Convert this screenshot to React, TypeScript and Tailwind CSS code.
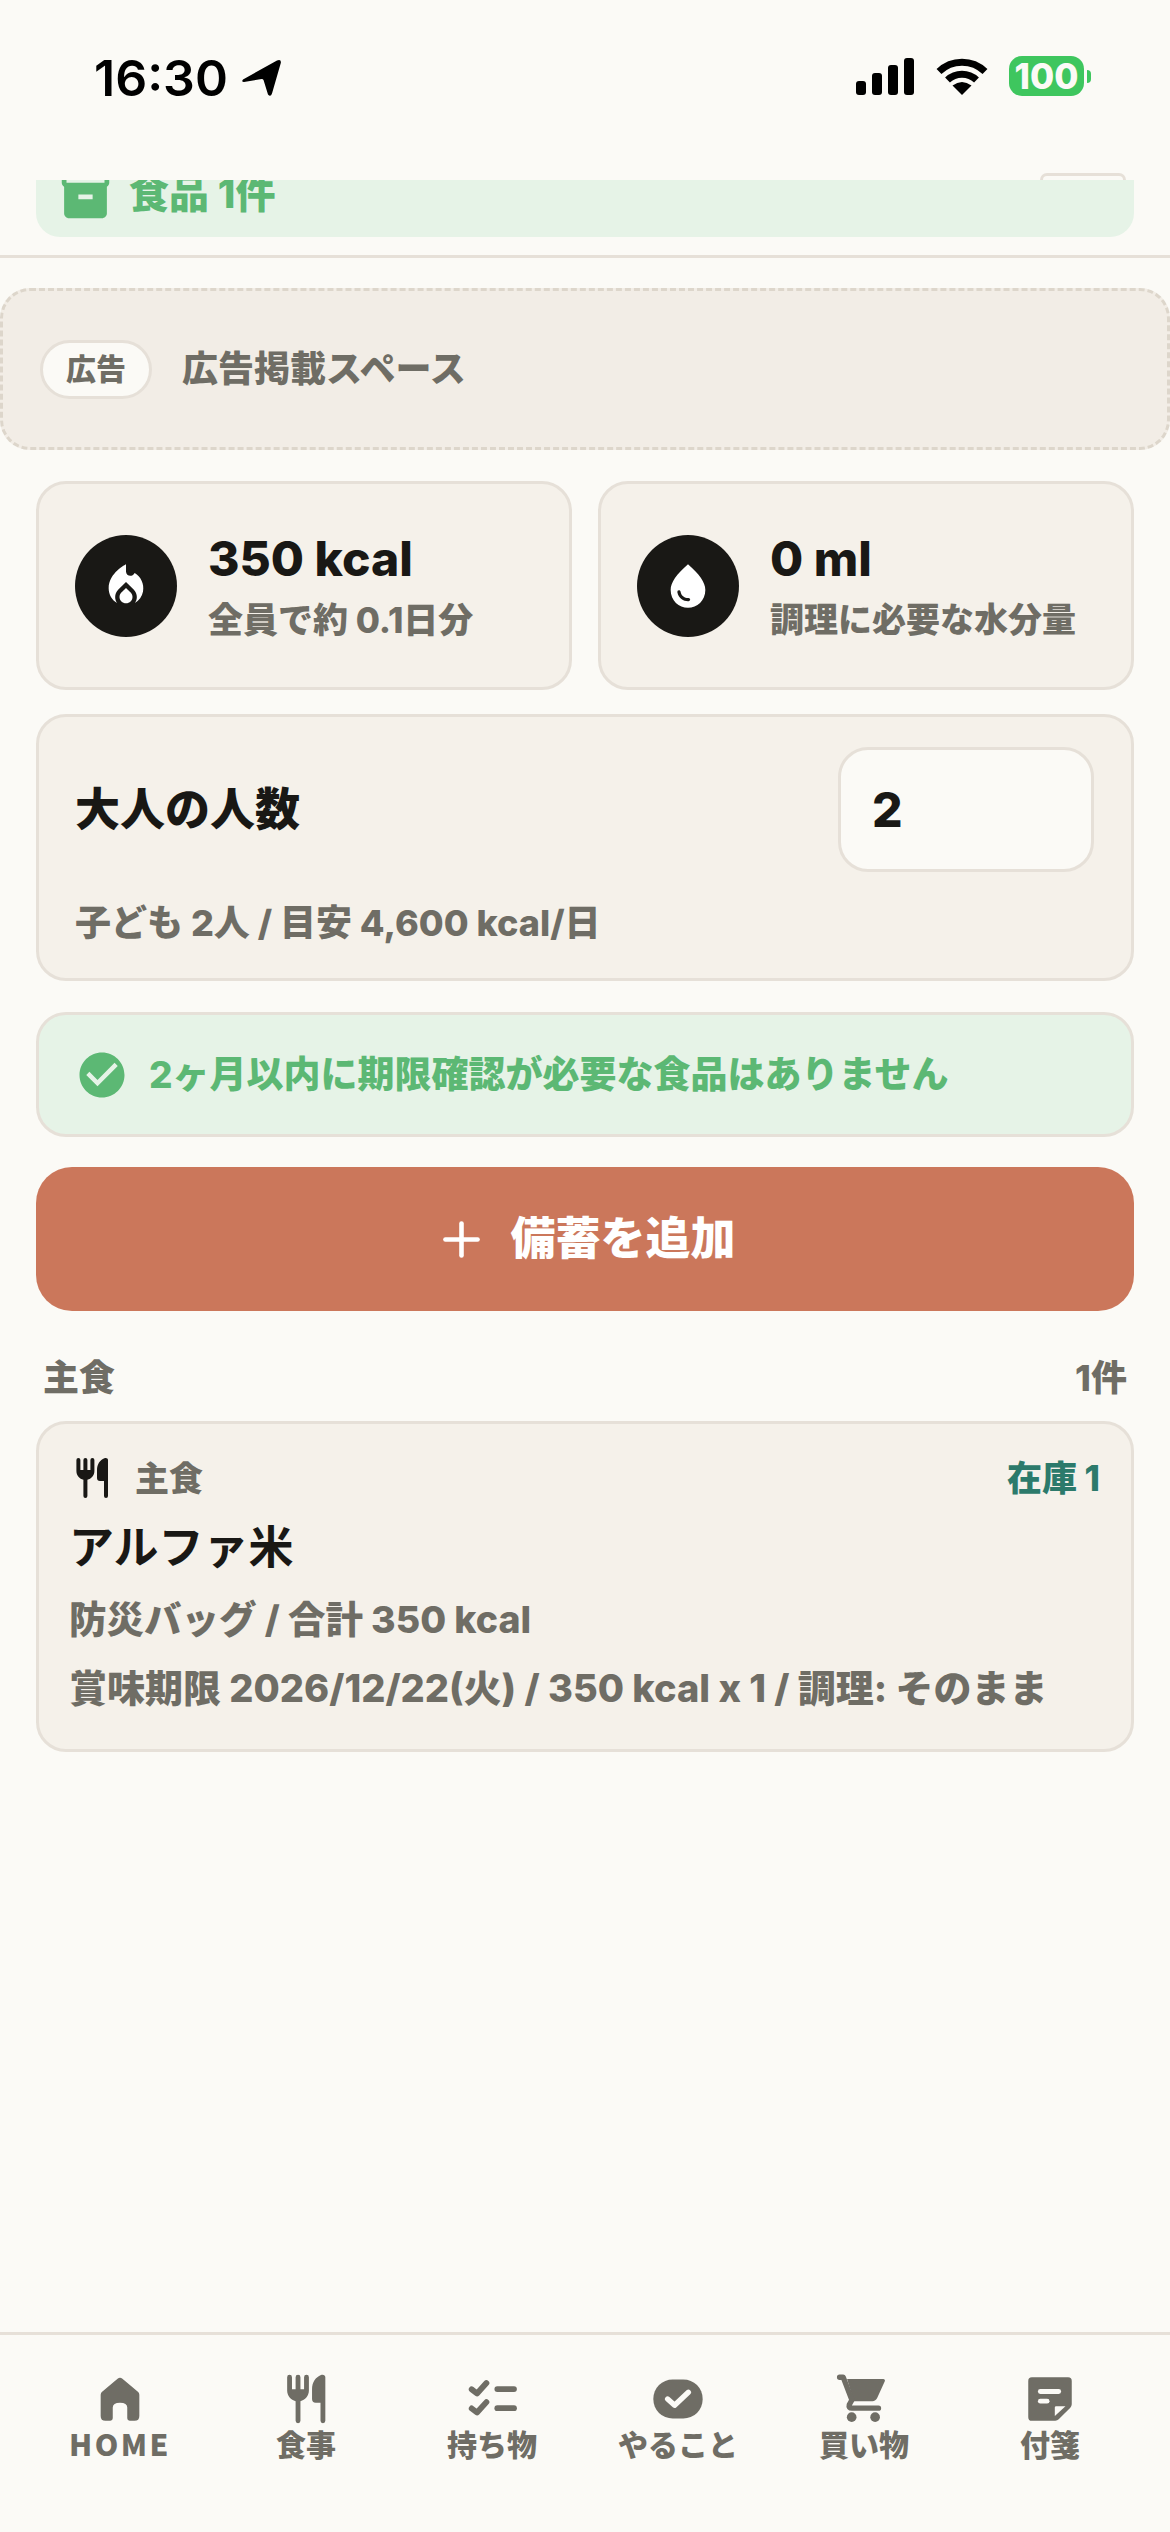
import { Plus } from "lucide-react"
import { MdCheckCircle, MdInventory2, MdLocalFireDepartment, MdWaterDrop } from "react-icons/md"

const ForkKnife = ({ className }: { className: string }) => (
  <svg viewBox="0 0 24 24" fill="currentColor" className={className}>
    <path d="M4.2 3V8.5C4.2 10.8 5.8 12.4 7.7 12.9V21a1 1 0 0 0 2 0V12.9C11.6 12.4 13.2 10.8 13.2 8.5V3a1 1 0 0 0-2 0V8H9.7V3a1 1 0 0 0-2 0V8H6.2V3a1 1 0 0 0-2 0Z" />
    <path d="M20 3V21a1 1 0 0 1-2 0V13.5H16A1.5 1.5 0 0 1 14.5 12V8C14.5 5 16 3 18.2 2.1 19.2 1.8 20 2.2 20 3Z" />
  </svg>
)

const navIconClass = "w-[58px] h-[58px] text-[#6f6d65]"

const HomeIcon = () => (
  <svg viewBox="0 0 24 24" fill="currentColor" className={navIconClass}>
    <path d="M4 10.2Q4 9.5 4.6 9L11 3.6Q12 2.9 13 3.6L19.4 9Q20 9.5 20 10.2V19Q20 21 18 21H16Q15 21 15 20V15.5Q15 13.5 12 13.5 9 13.5 9 15.5V20Q9 21 8 21H6Q4 21 4 19Z" />
  </svg>
)

const ChecklistIcon = () => (
  <svg viewBox="0 0 24 24" fill="none" stroke="currentColor" strokeWidth="2.4" strokeLinecap="round" strokeLinejoin="round" className={navIconClass}>
    <path d="M3.6 8 5.8 9.7 9.7 5.4" />
    <path d="M3.6 15.9 5.8 17.6 9.7 13.3" />
    <path d="M14.2 7.9H21.1" />
    <path d="M14.2 15.8H21.1" />
  </svg>
)

const TodoIcon = () => (
  <svg viewBox="0 0 24 24" className={navIconClass}>
    <rect x="1.8" y="3.9" width="20.4" height="16.2" rx="8" fill="currentColor" />
    <path d="M7.7 12 10.6 14.6 16.3 9.2" fill="none" stroke="#fbfaf6" strokeWidth="2.2" strokeLinecap="round" strokeLinejoin="round" />
  </svg>
)

const CartIcon = () => (
  <svg viewBox="0 0 24 24" fill="currentColor" className={navIconClass}>
    <path d="M5 3.7H20A.7.7 0 0 1 20.6 4.7L17.5 11.5Q16.8 12.9 15.5 12.9H7.8Z" />
    <path d="M1.9 3H3.4L7 12.4 5.9 14.4Q5.5 15.8 7 15.8H18" fill="none" stroke="currentColor" strokeWidth="2.2" strokeLinecap="round" strokeLinejoin="round" />
    <circle cx="6.9" cy="19.5" r="2" />
    <circle cx="16.6" cy="19.5" r="2" />
  </svg>
)

const NoteIcon = () => (
  <svg viewBox="0 0 24 24" className={navIconClass}>
    <path fill="currentColor" d="M4.5 3H19.5A1.5 1.5 0 0 1 21 4.5V14.2A2 2 0 0 1 20.4 15.6L15.6 20.4A2 2 0 0 1 14.2 21H4.5A1.5 1.5 0 0 1 3 19.5V4.5A1.5 1.5 0 0 1 4.5 3Z" />
    <rect x="7" y="7.9" width="9.6" height="2" rx="1" fill="#fbfaf6" />
    <rect x="7" y="11.9" width="4.8" height="2" rx="1" fill="#fbfaf6" />
    <path d="M14 19V15.5Q14 15 14.5 15H18.4Z" fill="#fbfaf6" />
  </svg>
)

const navItems = [
  { label: "HOME", icon: <HomeIcon />, extra: "tracking-[2.5px]" },
  { label: "食事", icon: <ForkKnife className={navIconClass} />, extra: "" },
  { label: "持ち物", icon: <ChecklistIcon />, extra: "" },
  { label: "やること", icon: <TodoIcon />, extra: "" },
  { label: "買い物", icon: <CartIcon />, extra: "" },
  { label: "付箋", icon: <NoteIcon />, extra: "" },
]

const StatusBar = () => (
  <div className="relative h-[180px] flex justify-between items-start pt-[50px] pl-[94px] pr-[79px]">
    <div className="flex items-center gap-[14px] text-black">
      <span className="text-[50px] leading-[56px] font-semibold">16:30</span>
      <svg viewBox="0 0 40 38" className="w-[40px] h-[38px]" fill="currentColor">
        <path d="M1 20.5 35 1.5Q39.5 0 38.8 4L30 34.5Q28.6 38.5 26 35.5L21.6 21.3Q21.2 20 19.6 20L2 23Q-1 23 1 20.5Z" />
      </svg>
    </div>
    <div className="flex items-center mt-[6px]">
      <div className="flex items-end gap-[6px] h-[38px]">
        <div className="w-[10px] h-[14px] rounded-[3px] bg-black" />
        <div className="w-[10px] h-[22px] rounded-[3px] bg-black" />
        <div className="w-[10px] h-[30px] rounded-[3px] bg-black" />
        <div className="w-[10px] h-[37px] rounded-[3px] bg-black" />
      </div>
      <svg viewBox="0 0 52 38" className="w-[52px] h-[38px] ml-[22px]" fill="none" stroke="black">
        <path d="M3 14.5A33 33 0 0 1 49 14.5" strokeWidth="7" />
        <path d="M11.5 23A21 21 0 0 1 40.5 23" strokeWidth="7" />
        <path d="M26 38 16.5 28.5Q26 21.5 35.5 28.5Z" fill="black" stroke="none" />
      </svg>
      <div className="ml-[21px] w-[75px] h-[40px] rounded-[13px] bg-[#3ec65e] flex items-center justify-center text-[35px] leading-none font-extrabold text-[#fbfaf6]">
        100
      </div>
      <div className="ml-[3px] w-[4px] h-[13px] rounded-r-[4px] bg-[#3ec65e]" />
    </div>
    <div className="absolute right-[44px] bottom-0 w-[86px] h-[7px] border-[3px] border-b-0 border-[#e6e0d8] rounded-t-[12px]" />
  </div>
)

const App = () => {
  return (
    <div className="w-[1170px] h-[2532px] flex flex-col bg-[#fbfaf6] text-[#191815] font-['Inter','Noto_Sans_CJK_JP',sans-serif]">
      <StatusBar />

      <div className="mx-[36px] h-[57px] rounded-b-[24px] bg-[#e6f3e7] overflow-hidden shrink-0">
        <div className="flex items-center gap-[15px] pl-[21px] -mt-[16px] text-[#5cb874]">
          <MdInventory2 className="w-[57px] h-[57px]" />
          <span className="text-[40px] leading-[60px] font-extrabold">食品 1件</span>
        </div>
      </div>
      <div className="mt-[18px] h-[3px] bg-[#e6e0d8] shrink-0" />

      <main className="flex-1 flex flex-col px-[36px] pt-[30px]">
        <div className="-mx-[36px] h-[162px] flex items-center gap-[30px] pl-[40px] rounded-[30px] border-[3px] border-dashed border-[#ddd6cb] bg-[#f2ede6]">
          <span className="-ml-[3px] h-[59px] w-[112px] flex items-center justify-center rounded-full border-[3px] border-[#e6e0d8] bg-[#fbfaf6] text-[30px] font-extrabold text-[#6f6d65]">
            広告
          </span>
          <span className="text-[36px] font-extrabold text-[#6f6d65]">広告掲載スペース</span>
        </div>

        <div className="mt-[31px] grid grid-cols-2 gap-[26px]">
          <div className="h-[209px] flex items-center gap-[31px] pl-[36px] rounded-[30px] border-[3px] border-[#e6e0d8] bg-[#f5f1ea]">
            <div className="w-[102px] h-[102px] rounded-full bg-[#191815] flex items-center justify-center">
              <MdLocalFireDepartment className="w-[52px] h-[52px] text-white" />
            </div>
            <div>
              <div className="text-[48px] leading-[60px] font-extrabold">350 kcal</div>
              <div className="mt-[8px] text-[35px] leading-[46px] font-extrabold text-[#6f6d65]">全員で約 0.1日分</div>
            </div>
          </div>
          <div className="h-[209px] flex items-center gap-[31px] pl-[36px] rounded-[30px] border-[3px] border-[#e6e0d8] bg-[#f5f1ea]">
            <div className="w-[102px] h-[102px] rounded-full bg-[#191815] flex items-center justify-center">
              <MdWaterDrop className="w-[52px] h-[52px] text-white" />
            </div>
            <div>
              <div className="text-[48px] leading-[60px] font-extrabold">0 ml</div>
              <div className="mt-[8px] text-[34px] leading-[46px] font-extrabold text-[#6f6d65]">調理に必要な水分量</div>
            </div>
          </div>
        </div>

        <div className="mt-[24px] pl-[36px] pr-[37px] pt-[30px] pb-[33px] rounded-[30px] border-[3px] border-[#e6e0d8] bg-[#f5f1ea]">
          <div className="flex items-center justify-between">
            <span className="text-[45px] font-extrabold">大人の人数</span>
            <div className="w-[256px] h-[125px] flex items-center pl-[31px] rounded-[30px] border-[3px] border-[#e6e0d8] bg-[#fbfaf6] text-[48px] font-extrabold">
              2
            </div>
          </div>
          <div className="mt-[29px] text-[36px] leading-[44px] font-extrabold text-[#6f6d65]">子ども 2人 / 目安 4,600 kcal/日</div>
        </div>

        <div className="mt-[31px] h-[125px] flex items-center gap-[20px] pl-[36px] rounded-[30px] border-[3px] border-[#e6e0d8] bg-[#e6f3e7] text-[#5cb874]">
          <MdCheckCircle className="w-[54px] h-[54px]" />
          <span className="text-[37px] font-extrabold">2ヶ月以内に期限確認が必要な食品はありません</span>
        </div>

        <button className="mt-[30px] h-[144px] flex items-center justify-center gap-[21px] rounded-[36px] bg-[#cb775b] text-white">
          <Plus size={55} strokeWidth={2} />
          <span className="text-[45px] font-extrabold">備蓄を追加</span>
        </button>

        <div className="mt-[45px] px-[7px] flex items-center justify-between text-[36px] leading-[44px] font-extrabold text-[#6f6d65]">
          <span>主食</span>
          <span>1件</span>
        </div>

        <div className="mt-[21px] pl-[30px] pr-[31px] pt-[28px] pb-[36px] rounded-[30px] border-[3px] border-[#e6e0d8] bg-[#f5f1ea]">
          <div className="flex items-center justify-between">
            <div className="flex items-center gap-[19px]">
              <ForkKnife className="w-[48px] h-[48px] text-[#191815] -ml-[1px]" />
              <span className="text-[34px] font-extrabold text-[#6f6d65]">主食</span>
            </div>
            <span className="text-[35px] font-extrabold text-[#2c7a6b]">在庫 1</span>
          </div>
          <div className="mt-[13px] text-[45px] leading-[60px] font-bold">アルファ米</div>
          <div className="mt-[17px] text-[37.5px] leading-[50px] font-extrabold text-[#6f6d65]">防災バッグ / 合計 350 kcal</div>
          <div className="mt-[18px] text-[38px] leading-[50px] font-extrabold text-[#6f6d65]">賞味期限 2026/12/22(火) / 350 kcal x 1 / 調理: そのまま</div>
        </div>
      </main>

      <nav className="h-[200px] shrink-0 border-t-[3px] border-[#e6e0d8] px-[27px] pt-[35px] grid grid-cols-6 font-['Noto_Sans_CJK_JP',sans-serif]">
        {navItems.map((item) => (
          <div key={item.label} className="flex flex-col items-center">
            {item.icon}
            <span className={`-mt-[2px] text-[30px] leading-[34px] font-extrabold text-[#6f6d65] ${item.extra}`}>{item.label}</span>
          </div>
        ))}
      </nav>
    </div>
  )
}

export default App
